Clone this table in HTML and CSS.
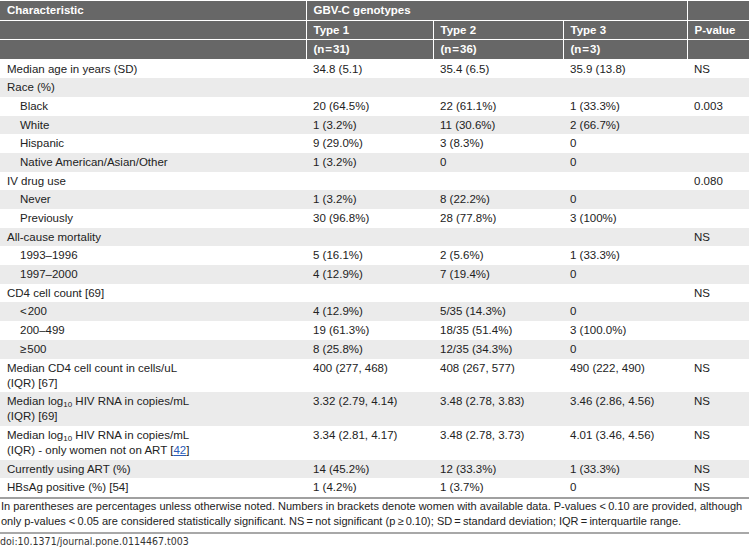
FILE: index.html
```html
<!DOCTYPE html>
<html lang="en">
<head>
<meta charset="utf-8">
<title>Table 3</title>
<link rel="stylesheet" href="styles.css">
</head>
<body>
<div class="page">
<table class="data">
<colgroup>
<col class="c-char"><col class="c-t1"><col class="c-t2"><col class="c-t3"><col class="c-p">
</colgroup>
<thead>
<tr><th>Characteristic</th><th colspan="3">GBV-C genotypes</th><th></th></tr>
<tr><th></th><th>Type 1</th><th>Type 2</th><th>Type 3</th><th>P-value</th></tr>
<tr><th></th><th>(n&#8202;=&#8202;31)</th><th>(n&#8202;=&#8202;36)</th><th>(n&#8202;=&#8202;3)</th><th></th></tr>
</thead>
<tbody>
<tr><td>Median age in years (SD)</td><td>34.8 (5.1)</td><td>35.4 (6.5)</td><td>35.9 (13.8)</td><td>NS</td></tr>
<tr><td>Race (%)</td><td></td><td></td><td></td><td></td></tr>
<tr><td class="sub">Black</td><td>20 (64.5%)</td><td>22 (61.1%)</td><td>1 (33.3%)</td><td>0.003</td></tr>
<tr><td class="sub">White</td><td>1 (3.2%)</td><td>11 (30.6%)</td><td>2 (66.7%)</td><td></td></tr>
<tr><td class="sub">Hispanic</td><td>9 (29.0%)</td><td>3 (8.3%)</td><td>0</td><td></td></tr>
<tr><td class="sub">Native American/Asian/Other</td><td>1 (3.2%)</td><td>0</td><td>0</td><td></td></tr>
<tr><td>IV drug use</td><td></td><td></td><td></td><td>0.080</td></tr>
<tr><td class="sub">Never</td><td>1 (3.2%)</td><td>8 (22.2%)</td><td>0</td><td></td></tr>
<tr><td class="sub">Previously</td><td>30 (96.8%)</td><td>28 (77.8%)</td><td>3 (100%)</td><td></td></tr>
<tr><td>All-cause mortality</td><td></td><td></td><td></td><td>NS</td></tr>
<tr><td class="sub">1993–1996</td><td>5 (16.1%)</td><td>2 (5.6%)</td><td>1 (33.3%)</td><td></td></tr>
<tr><td class="sub">1997–2000</td><td>4 (12.9%)</td><td>7 (19.4%)</td><td>0</td><td></td></tr>
<tr><td>CD4 cell count [69]</td><td></td><td></td><td></td><td>NS</td></tr>
<tr><td class="sub">&lt;&#8202;200</td><td>4 (12.9%)</td><td>5/35 (14.3%)</td><td>0</td><td></td></tr>
<tr><td class="sub">200–499</td><td>19 (61.3%)</td><td>18/35 (51.4%)</td><td>3 (100.0%)</td><td></td></tr>
<tr><td class="sub">≥&#8202;500</td><td>8 (25.8%)</td><td>12/35 (34.3%)</td><td>0</td><td></td></tr>
<tr><td>Median CD4 cell count in cells/uL<br>(IQR) [67]</td><td>400 (277, 468)</td><td>408 (267, 577)</td><td>490 (222, 490)</td><td>NS</td></tr>
<tr><td>Median log<sub>10</sub> HIV RNA in copies/mL<br>(IQR) [69]</td><td>3.32 (2.79, 4.14)</td><td>3.48 (2.78, 3.83)</td><td>3.46 (2.86, 4.56)</td><td>NS</td></tr>
<tr><td>Median log<sub>10</sub> HIV RNA in copies/mL<br>(IQR) - only women not on ART [<a href="#r42">42</a>]</td><td>3.34 (2.81, 4.17)</td><td>3.48 (2.78, 3.73)</td><td>4.01 (3.46, 4.56)</td><td>NS</td></tr>
<tr><td>Currently using ART (%)</td><td>14 (45.2%)</td><td>12 (33.3%)</td><td>1 (33.3%)</td><td>NS</td></tr>
<tr><td>HBsAg positive (%) [54]</td><td>1 (4.2%)</td><td>1 (3.7%)</td><td>0</td><td>NS</td></tr>
</tbody>
</table>
<p class="foot">In parentheses are percentages unless otherwise noted. Numbers in brackets denote women with available data. P-values &lt;&#8201;0.10 are provided, although only p-values &lt;&#8201;0.05 are considered statistically significant. NS&#8201;=&#8201;not significant (p&#8201;≥&#8201;0.10); SD&#8201;=&#8201;standard deviation; IQR&#8201;=&#8201;interquartile range.</p>
<p class="doi">doi:10.1371/journal.pone.0114467.t003</p>
</div>
</body>
</html>
```
FILE: styles.css
```css
html, body {
  margin: 0;
  padding: 0;
  background: #fff;
}
.page {
  padding-top: 1px;
  font-family: "Liberation Sans", Arial, sans-serif;
  color: #222;
}
.data {
  width: 749px;
  table-layout: fixed;
  border-collapse: collapse;
  font-size: 11.5px;
  line-height: 15px;
}
.c-char { width: 306px; }
.c-t1 { width: 127px; }
.c-t2 { width: 130px; }
.c-t3 { width: 124px; }
.c-p { width: 62px; }
.data th {
  background: #676767;
  color: #fff;
  font-weight: bold;
  text-align: left;
  padding: 2px 7px 1.5px;
  border: 1px solid #fff;
  height: 15px;
}
.data thead tr:first-child th { border-top: 0; }
.data th:first-child { border-left: 0; }
.data th:last-child { border-right: 0; }
.data td {
  padding: 2px 7px 1.7px;
  vertical-align: top;
  text-align: left;
  height: 15px;
}
.data tbody tr:nth-child(even) td { background: #ebebeb; }
.data tbody tr:last-child td { border-bottom: 2px solid #a0a0a0; }
.data td.sub { padding-left: 20px; }
.data sub {
  font-size: 8px;
  line-height: 0;
  vertical-align: -2px;
}
.data a {
  color: #2b5bb8;
  text-decoration: underline;
}
.foot {
  margin: 0;
  padding: 0 0 0 1px;
  font-size: 11px;
  line-height: 15px;
  color: #222;
}
.doi {
  margin: 3px 0 0;
  padding-top: 1px;
  border-top: 2px solid #a8a8a8;
  font-family: "Liberation Sans Narrow", "DejaVu Sans Condensed", "Liberation Sans", sans-serif;
  font-size: 10.5px;
  line-height: 13px;
  color: #333;
}
```
